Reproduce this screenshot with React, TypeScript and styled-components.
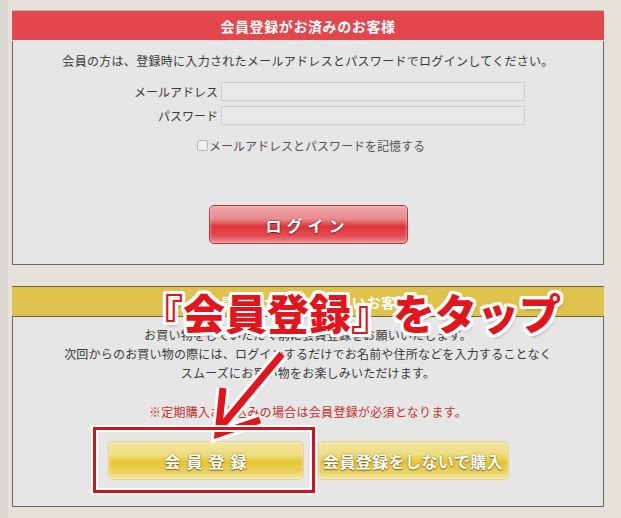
import { FC } from 'react';
import styled, { createGlobalStyle } from 'styled-components';

const GlobalStyle = createGlobalStyle`
  html, body {
    margin: 0;
    padding: 0;
    background: #e4e2db;
  }
  body {
    font-family: "Noto Sans CJK JP", "Noto Sans", sans-serif;
    color: #333;
  }
`;

const App: FC = () => {
  return (
    <Page>
      <GlobalStyle />
      <Panel>
        <PanelHead tone="red">会員登録がお済みのお客様</PanelHead>
        <PanelBody>
          <Lead>会員の方は、登録時に入力されたメールアドレスとパスワードでログインしてください。</Lead>
          <Form>
            <Label>メールアドレス</Label>
            <Input type="text" />
            <Label>パスワード</Label>
            <Input type="password" />
          </Form>
          <Remember>
            <Check type="checkbox" />
            メールアドレスとパスワードを記憶する
          </Remember>
          <LoginButton>ログイン</LoginButton>
        </PanelBody>
      </Panel>

      <Panel>
        <PanelHead tone="yellow">会員登録がお済みでないお客様</PanelHead>
        <PanelBody>
          <Guide>
            お買い物をしていただく前に会員登録をお願いいたします。
            <br />
            次回からのお買い物の際には、ログインするだけでお名前や住所などを入力することなく
            <br />
            スムーズにお買い物をお楽しみいただけます。
          </Guide>
          <Notice>※定期購入お申込みの場合は会員登録が必須となります。</Notice>
          <ButtonRow>
            <GoldButton wide spaced>会員登録</GoldButton>
            <GoldButton>会員登録をしないで購入</GoldButton>
          </ButtonRow>
        </PanelBody>
      </Panel>

      <Callout>『会員登録』をタップ</Callout>
      <Arrow width="120" height="110" viewBox="0 0 120 110">
        <polyline points="92,8 30,82" fill="none" stroke="#fff" strokeWidth="13" />
        <polyline points="33,42 28,88 70,74" fill="none" stroke="#fff" strokeWidth="13" strokeLinejoin="miter" />
        <polyline points="92,8 30,82" fill="none" stroke="#e3141c" strokeWidth="7" />
        <polyline points="33,42 28,88 70,74" fill="none" stroke="#e3141c" strokeWidth="7" strokeLinejoin="miter" />
      </Arrow>
      <Highlight />
    </Page>
  );
};

export default App;

const Page = styled.div`
  position: relative;
  width: 621px;
  height: 518px;
  box-sizing: border-box;
  padding: 10px 0 0 12px;
  display: flex;
  flex-direction: column;
  gap: 21px;
  background: linear-gradient(90deg, #d9d7d0 0, #d9d7d0 8px, #e4e2db 8px);
  overflow: hidden;
`;

const Panel = styled.div`
  width: 592px;
  box-sizing: border-box;
  border: 1px solid #6a6860;
  background: #e6e6e6;
`;

const PanelHead = styled.div<{ tone: 'red' | 'yellow' }>`
  height: 31px;
  box-sizing: border-box;
  margin: -1px -1px 0;
  display: flex;
  align-items: center;
  justify-content: center;
  font-size: 14px;
  letter-spacing: 0.6px;
  font-weight: bold;
  color: #fff;
  background: ${(p) => (p.tone === 'red' ? '#e2474d' : '#dfc24b')};
  border-top: 1px solid ${(p) => (p.tone === 'red' ? '#b9b6ae' : '#6d6447')};
  border-bottom: 1px solid ${(p) => (p.tone === 'red' ? '#e6e6e6' : '#6d6447')};
`;

const PanelBody = styled.div`
  display: flex;
  flex-direction: column;
  align-items: center;
`;

const Lead = styled.p`
  margin: 11px 0 0;
  font-size: 12px;
  line-height: 18px;
  letter-spacing: 0.3px;
  color: #3a3a3a;
`;

const Form = styled.div`
  display: grid;
  grid-template-columns: 86px 304px;
  column-gap: 3px;
  row-gap: 5px;
  align-items: center;
  margin: 12px 0 0 41px;
`;

const Label = styled.label`
  text-align: right;
  white-space: nowrap;
  font-size: 12px;
  color: #3a3a3a;
`;

const Input = styled.input`
  height: 19px;
  box-sizing: border-box;
  border: 1px solid #cfcfcf;
  background: #e9e9e9;
  outline: none;
`;

const Remember = styled.label`
  display: flex;
  align-items: center;
  height: 17px;
  margin: 12px 0 0 6px;
  font-size: 12px;
  color: #555;
`;

const Check = styled.input`
  width: 11px;
  height: 11px;
  margin: 0 1px 0 0;
  opacity: 0.45;
`;

const LoginButton = styled.button`
  width: 199px;
  height: 39px;
  margin: 51px 0 20px;
  border: 1px solid #b5353b;
  border-radius: 5px;
  font-family: inherit;
  font-size: 16px;
  font-weight: bold;
  letter-spacing: 5px;
  padding-left: 5px;
  color: #fff;
  text-shadow: 0 0 2px #8a1c22, 0 1px 1px #8a1c22;
  background: linear-gradient(
    180deg,
    #efa4a6 0%,
    #e88b8e 35%,
    #e0353c 55%,
    #e24a50 80%,
    #ec9194 100%
  );
  box-shadow: inset 0 0 3px rgba(255, 255, 255, 0.6);
`;

const Guide = styled.p`
  margin: 8px 0 0;
  font-size: 12px;
  line-height: 19px;
  text-align: center;
  color: #3a3a3a;
  letter-spacing: 0.2px;
`;

const Notice = styled.p`
  margin: 21px 0 0;
  font-size: 12px;
  line-height: 18px;
  color: #c4302b;
  letter-spacing: 0.3px;
`;

const ButtonRow = styled.div`
  display: flex;
  gap: 14px;
  margin: 20px 0 26px;
`;

const GoldButton = styled.button<{ wide?: boolean; spaced?: boolean }>`
  width: ${(p) => (p.wide ? '196px' : '191px')};
  height: 39px;
  border: 1px solid #e6d48c;
  border-radius: 5px;
  font-family: inherit;
  font-weight: bold;
  font-size: 16px;
  letter-spacing: ${(p) => (p.spaced ? '6px' : '0.4px')};
  padding: ${(p) => (p.spaced ? '0 0 0 6px' : '0')};
  color: #fff;
  text-shadow: 0 0 2px #8c7420, 0 1px 1px #7a6418;
  background: linear-gradient(
    180deg,
    #f2e6a4 0%,
    #efdc7c 35%,
    #e7c531 55%,
    #ead160 80%,
    #f3e7a8 100%
  );
  box-shadow: inset 0 0 3px rgba(255, 255, 255, 0.6);
`;

const Callout = styled.div`
  position: absolute;
  left: 141px;
  top: 284px;
  font-size: 42px;
  font-weight: 900;
  line-height: 56px;
  white-space: nowrap;
  color: #e3141c;
  text-shadow:
    3px 0 0 #fff, -3px 0 0 #fff, 0 3px 0 #fff, 0 -3px 0 #fff,
    2px 2px 0 #fff, -2px 2px 0 #fff, 2px -2px 0 #fff, -2px -2px 0 #fff,
    3px 2px 0 #fff, -3px 2px 0 #fff, 3px -2px 0 #fff, -3px -2px 0 #fff,
    2px 3px 0 #fff, -2px 3px 0 #fff, 2px -3px 0 #fff, -2px -3px 0 #fff,
    2px 4px 3px rgba(0, 0, 0, 0.25);
`;

const Arrow = styled.svg`
  position: absolute;
  left: 190px;
  top: 346px;
`;

const Highlight = styled.div`
  position: absolute;
  left: 93px;
  top: 427px;
  width: 222px;
  height: 66px;
  box-sizing: border-box;
  border: 3px solid #d3131b;
  box-shadow: 0 0 0 2px #fff, inset 0 0 0 2px #fff;
`;
